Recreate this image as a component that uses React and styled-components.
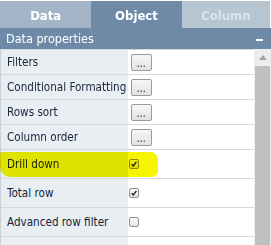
import React from 'react';
import styled, { createGlobalStyle } from 'styled-components';

const Global = createGlobalStyle`
    body {
        margin: 0;
        background: #fff;
        font-family: "DejaVu Sans Condensed", "DejaVu Sans", sans-serif;
    }
`;

const Panel = styled.div`
    width: 271px;
    height: 245px;
    overflow: hidden;
    padding-top: 1px;
    box-sizing: border-box;
`;

const Tabs = styled.div`
    display: flex;
    height: 27px;
    padding-right: 1px;
`;

const Tab = styled.div`
    flex: ${p => p.w};
    display: flex;
    align-items: center;
    justify-content: center;
    background: ${p => p.active ? '#6e8aa7' : p.dim ? '#b7c5d1' : '#a2b4c5'};
    color: ${p => p.dim ? '#dbe2e8' : '#fff'};
    font-family: "DejaVu Sans Condensed", "DejaVu Sans", sans-serif;
    font-weight: bold;
    font-size: 13px;
    padding-top: 1px;
`;

const Header = styled.div`
    display: flex;
    align-items: center;
    height: 21px;
    padding: 0 8px 0 6px;
    background: #6e8aa7;
    color: #fff;
    font-family: "DejaVu Sans Condensed", "DejaVu Sans", sans-serif;
    font-size: 12.5px;
`;

const HeaderTitle = styled.div`
    flex: 1;
`;

const Collapse = styled.div`
    width: 7px;
    height: 2px;
    background: #fff;
    margin-top: 3px;
`;

const Body = styled.div`
    display: flex;
    height: 196px;
`;

const Rows = styled.div`
    flex: 1;
    display: flex;
    flex-direction: column;
    border-left: 1px solid #c9d0d6;
`;

const Row = styled.div`
    position: relative;
    display: grid;
    grid-template-columns: 127px 1fr;
    height: ${p => p.h}px;
    border-top: 1px solid #d6d9dc;
    box-sizing: border-box;
    flex-shrink: 0;
`;

const Label = styled.div`
    display: flex;
    align-items: center;
    padding-left: 6px;
    background: #e9eef2;
    color: #16243a;
    font-family: "DejaVu Sans Condensed", "DejaVu Sans", sans-serif;
    font-size: 11.6px;
    white-space: nowrap;
`;

const Value = styled.div`
    display: flex;
    align-items: center;
    padding-left: ${p => p.pl || 3}px;
`;

const DotsButton = styled.div`
    width: 19px;
    height: 15px;
    border: 1px solid #9a9a9a;
    border-radius: 2px;
    background: linear-gradient(#f7f7f7, #e2e2e2);
    display: flex;
    align-items: flex-end;
    justify-content: center;
    font-family: "Liberation Sans", Arial, sans-serif;
    font-size: 9px;
    font-weight: bold;
    line-height: 11px;
    color: #3d5a8a;
    letter-spacing: 0.5px;
`;

const Check = styled.div`
    width: 8px;
    height: 8px;
    border: 1px solid #8f8f8f;
    border-radius: 2px;
    background: linear-gradient(#fbfbfb, #e4e4e4);
    display: flex;
    align-items: center;
    justify-content: center;
`;

const Marker = styled.div`
    position: absolute;
    left: -1px;
    top: 2px;
    width: 158px;
    height: 25px;
    background: #f6f400;
    border-radius: 2px 8px 6px 10px;
    mix-blend-mode: multiply;
    pointer-events: none;
`;

const Scrollbar = styled.div`
    width: 16px;
    display: flex;
    flex-direction: column;
    background: #ececec;
    padding-left: 1px;
`;

const ScrollArrow = styled.div`
    height: 17px;
    display: flex;
    justify-content: center;
    align-items: center;
`;

const Thumb = styled.div`
    flex: 1;
    background: #c0c0c0;
    margin-right: 1px;
`;

function CheckIcon() {
    return (
        <svg width="6" height="6" viewBox="0 0 6 6">
            <path d="M0.6 3.2 L2.3 4.9 L5.4 0.9" stroke="#222" strokeWidth="1.4" fill="none" />
        </svg>
    );
}

const rows = [
    { label: 'Filters', type: 'button', h: 25 },
    { label: 'Conditional Formatting', type: 'button', h: 25 },
    { label: 'Rows sort', type: 'button', h: 25 },
    { label: 'Column order', type: 'button', h: 25 },
    { label: 'Drill down', type: 'check', checked: true, h: 29, mark: true },
    { label: 'Total row', type: 'check', checked: true, h: 29 },
    { label: 'Advanced row filter', type: 'check', checked: false, h: 29 },
    { label: '', type: 'none', h: 20 },
];

export default function App() {
    return (
        <Panel>
            <Global />
            <Tabs>
                <Tab w="91">Data</Tab>
                <Tab w="90" active>Object</Tab>
                <Tab w="88" dim>Column</Tab>
            </Tabs>
            <Header>
                <HeaderTitle>Data properties</HeaderTitle>
                <Collapse />
            </Header>
            <Body>
                <Rows>
                    {rows.map((r, i) => (
                        <Row key={i} h={r.h}>
                            <Label>{r.label}</Label>
                            <Value pl={r.type === 'check' ? 1 : 3}>
                                {r.type === 'button' && <DotsButton>...</DotsButton>}
                                {r.type === 'check' && <Check>{r.checked && <CheckIcon />}</Check>}
                            </Value>
                            {r.mark && <Marker />}
                        </Row>
                    ))}
                </Rows>
                <Scrollbar>
                    <ScrollArrow>
                        <svg width="8" height="5" viewBox="0 0 8 5">
                            <path d="M0 5 L4 0 L8 5 Z" fill="#a3a3a3" />
                        </svg>
                    </ScrollArrow>
                    <Thumb />
                </Scrollbar>
            </Body>
        </Panel>
    );
}
